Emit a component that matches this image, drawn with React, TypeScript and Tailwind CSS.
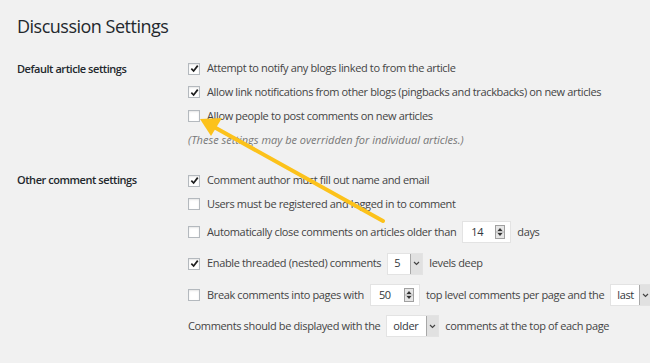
import React from 'react';

const font = {fontFamily: '"Open Sans", "Noto Sans", sans-serif'};

const Check: React.FC<{checked?: boolean}> = ({checked}) => (
  <span className="mr-[7px] inline-flex h-[12px] w-[12px] shrink-0 items-center justify-center border border-[#b4b9be] bg-white shadow-[inset_0_1px_2px_rgba(0,0,0,0.1)]">
    {checked && (
      <svg viewBox="0 0 10 10" className="h-[9px] w-[9px]">
        <path d="M1.5 5.2 L4 7.8 L8.6 1.8" fill="none" stroke="#1e1e1e" strokeWidth="1.9" />
      </svg>
    )}
  </span>
);

const NumberBox: React.FC<{value: string; width: string}> = ({value, width}) => (
  <span className={`mx-[6px] inline-flex h-[22px] shrink-0 items-center justify-between border border-[#e3e3e3] bg-white pl-[8px] pr-[5px] ${width}`}>
    <span className="text-[#32373c]">{value}</span>
    <span className="flex h-[14px] w-[10px] flex-col items-center justify-center border border-[#a0a0a0] bg-[#e6e6e6]">
      <svg viewBox="0 0 8 12" className="h-[12px] w-[8px]">
        <path d="M4 2 L6.5 5 L1.5 5 Z" fill="#333" />
        <path d="M4 10 L6.5 7 L1.5 7 Z" fill="#333" />
        <line x1="0" y1="6" x2="8" y2="6" stroke="#a0a0a0" strokeWidth="0.8" />
      </svg>
    </span>
  </span>
);

const Select: React.FC<{value: string; width: string}> = ({value, width}) => (
  <span className={`mx-[6px] inline-flex h-[22px] shrink-0 items-stretch border border-[#e3e3e3] bg-white ${width}`}>
    <span className="flex flex-1 items-center pl-[6px] text-[#32373c]">{value}</span>
    <span className="flex w-[12px] items-center justify-center border-l border-[#a8a8a8] bg-[#e1e1e1]">
      <svg viewBox="0 0 8 6" className="h-[5px] w-[7px]">
        <path d="M1 1.2 L4 4.2 L7 1.2" fill="none" stroke="#444" strokeWidth="1.4" />
      </svg>
    </span>
  </span>
);

const Row: React.FC<{h: string; children: React.ReactNode}> = ({h, children}) => (
  <div className={`flex items-center whitespace-nowrap ${h}`}>{children}</div>
);

export default function App() {
  return (
    <div className="relative h-[363px] w-full overflow-hidden bg-[#f1f1f1] px-[17px] text-[11px] tracking-[-0.36px] text-[#444]" style={font}>
      <h1 className="mt-[13px] h-[26px] text-[18px] leading-[26px] tracking-[-0.5px] text-[#23282d]">Discussion Settings</h1>

      <div className="mt-[18px] flex">
        <div className="flex h-[24px] w-[171px] shrink-0 items-center font-semibold tracking-[-0.45px] text-[#23282d]">Default article settings</div>
        <div className="flex flex-col">
          <Row h="h-[23px]"><Check checked />Attempt to notify any blogs linked to from the article</Row>
          <Row h="h-[24px]"><Check checked />Allow link notifications from other blogs (pingbacks and trackbacks) on new articles</Row>
          <Row h="h-[24px]"><Check />Allow people to post comments on new articles</Row>
          <Row h="h-[24px]"><span className="italic tracking-normal text-[#777]">(These settings may be overridden for individual articles.)</span></Row>
        </div>
      </div>

      <div className="mt-[17px] flex">
        <div className="flex h-[23px] w-[171px] shrink-0 items-center font-semibold tracking-[-0.45px] text-[#23282d]">Other comment settings</div>
        <div className="flex flex-col">
          <Row h="h-[23px]"><Check checked />Comment author must fill out name and email</Row>
          <Row h="h-[24px]"><Check />Users must be registered and logged in to comment</Row>
          <Row h="h-[32px]"><Check />Automatically close comments on articles older than<NumberBox value="14" width="w-[49px]" />days</Row>
          <Row h="h-[31px]"><Check checked />Enable threaded (nested) comments<Select value="5" width="w-[36px]" />levels deep</Row>
          <Row h="h-[32px]"><Check />Break comments into pages with<NumberBox value="50" width="w-[50px]" />top level comments per page and the<Select value="last" width="w-[42px]" /></Row>
          <Row h="h-[30px]">Comments should be displayed with the<Select value="older" width="w-[53px]" />comments at the top of each page</Row>
        </div>
      </div>

      <svg className="pointer-events-none absolute left-0 top-0" width="650" height="363" viewBox="0 0 650 363">
        <line x1="383" y1="221" x2="214" y2="127" stroke="#fcc21b" strokeWidth="4" strokeLinecap="round" />
        <path d="M200 119 L222 118 L211 136 Z" fill="#fcc21b" />
      </svg>
    </div>
  );
}
